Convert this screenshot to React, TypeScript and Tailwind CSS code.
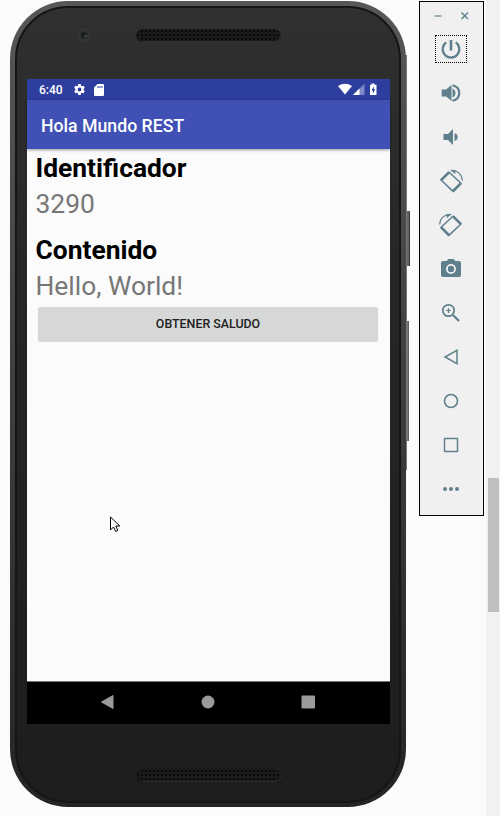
import type { ReactNode } from 'react';

function Grille({ id }: { id: string }) {
  return (
    <svg width="145" height="13" viewBox="0 0 145 13" className="block">
      <defs>
        <pattern id={id} width="4" height="4" patternUnits="userSpaceOnUse">
          <rect width="4" height="4" fill="#1b1b1b" />
          <rect x="1" y="1" width="2" height="2" fill="#0a0a0a" />
        </pattern>
      </defs>
      <rect x="0.5" y="0.5" width="144" height="12" rx="6" fill={`url(#${id})`} stroke="#191919" />
      <path d="M6 12.6H139a6 6 0 0 0 5.6-6" fill="none" stroke="#3a3a3a" strokeWidth="0.7" />
    </svg>
  );
}

function StatusBar() {
  return (
    <div className="flex h-[21px] items-center bg-[#2d3e9e] pl-3 pr-3 text-white">
      <span className="w-[34px] pt-[2px] text-[12px] font-medium leading-[21px]">6:40</span>
      <svg width="13" height="13" viewBox="0 0 24 24" fill="white">
        <path d="M19.4 13a7.6 7.6 0 0 0 0-2l2.1-1.6a.5.5 0 0 0 .1-.7l-2-3.4a.5.5 0 0 0-.6-.2l-2.5 1a7.300 7.300 0 0 0-1.700-1L14.400 2.400a.5.5 0 0 0-.5-.4h-4a.5.5 0 0 0-.5.4L9.100 5.100a7.700 7.700 0 0 0-1.700 1l-2.500-1a.5.5 0 0 0-.6.2l-2 3.400a.5.5 0 0 0 .1.700L4.500 11a7.600 7.600 0 0 0 0 2l-2.100 1.600a.5.5 0 0 0-.1.700l2 3.400c.1.200.4.300.6.200l2.500-1a7.300 7.300 0 0 0 1.700 1l.3 2.700c0 .2.200.4.500.4h4c.3 0 .5-.2.5-.4l.4-2.700a7.300 7.300 0 0 0 1.700-1l2.500 1c.2.100.5 0 .6-.2l2-3.400a.5.5 0 0 0-.1-.700ZM12 15.500a3.500 3.500 0 1 1 0-7 3.500 3.500 0 0 1 0 7Z" />
      </svg>
      <svg width="10" height="12" viewBox="0 0 10 12" className="ml-2" fill="white">
        <path fillRule="evenodd" d="M3.500 0H9q1 0 1 1v10q0 1-1 1H1q-1 0-1-1V3.500ZM3.500 2v2h1V2Zm2 0v2h1V2Zm2 0v2h1V2Z" />
      </svg>
      <svg width="40" height="13" viewBox="0 0 40 13" className="ml-auto">
        <path d="M0 3Q7 -1.600 14 3L7 11.500Z" fill="white" />
        <path d="M26.500 .8V12H15Z" fill="#7f89c6" />
        <path d="M21.500 5.600V12H15Z" fill="white" />
        <path d="M33.500 .5h3v1.300H38.500V12h-6.500V1.800h1.500Z" fill="white" />
        <path d="M35.700 3.300 33.500 7.400h1.400V10.700L37.200 6.300h-1.500Z" fill="#2d3e9e" />
      </svg>
    </div>
  );
}

function Screen() {
  return (
    <div className="flex h-[645px] w-[363px] flex-col bg-[#fbfbfb]">
      <StatusBar />
      <div className="z-10 flex h-[49px] items-center bg-[#4050b5] pl-[14px] pt-[3px] text-[17.700px] font-medium text-white shadow-[0_1px_3px_rgba(0,0,0,0.4)]">
        <span className="whitespace-nowrap">Hola Mundo REST</span>
      </div>
      <div className="flex-1 pl-[8.500px] pt-[2px] text-[26.400px] text-[#777]">
        <div className="h-[36px] font-bold leading-[34px] text-black">Identificador</div>
        <div className="h-[46px] leading-[34px]">3290</div>
        <div className="h-[36px] font-bold leading-[34px] text-black">Contenido</div>
        <div className="h-[37px] leading-[34px]">Hello, World!</div>
        <button className="ml-[2.500px] mt-px block h-[34px] w-[340px] rounded-[2px] bg-[#d6d8d7] text-center text-[12.400px] font-medium leading-[34px] text-[#212121] shadow-[0_1px_1px_rgba(0,0,0,0.15)]">
          OBTENER SALUDO
        </button>
      </div>
      <div className="flex h-[43px] items-center justify-center border-t border-[#777] bg-black pb-[2px]">
        <svg width="215" height="16" viewBox="0 0 215 16" className="block" fill="#999b9a">
          <path d="M12 1.500v13L.5 8Z" stroke="#999b9a" strokeLinejoin="round" />
          <circle cx="107" cy="8" r="6.500" />
          <rect x="200.500" y="1.500" width="13.500" height="13" rx="1" />
        </svg>
      </div>
    </div>
  );
}

function Cursor() {
  return (
    <svg width="12" height="19" viewBox="0 0 12 19" className="absolute left-[99px] top-[514px]">
      <path d="M1.500 2v13l3-3 2.300 4.500 2-1-2-4.500h4Z" fill="white" stroke="black" strokeWidth="1" />
    </svg>
  );
}

function Phone() {
  return (
    <div className="relative mt-px h-[806px] w-[396px] shrink-0">
      <div className="absolute right-[-4px] top-[210px] h-[55px] w-[5px] border-r border-[#383838] bg-[#666]" />
      <div className="absolute right-[-3px] top-[320px] h-[120px] w-[4px] border-r border-[#605f60] bg-[#777]" />
      <div className="absolute right-[-1px] top-[54px] h-[415px] w-[2px] bg-[#777]" />
      <div className="relative h-full rounded-[58px] bg-linear-to-b from-[#555856] via-[#414041] via-45% to-[#242424] p-[5px] pb-[4px]">
        <div className="flex h-full flex-col items-center rounded-[53px] border-2 border-[#151515] bg-linear-to-b from-[#303030] via-[#262626] via-35% to-[#1d1d1d]">
          <div className="relative flex h-[71px] w-full shrink-0 justify-center pt-[21px]">
            <svg width="16" height="16" viewBox="0 0 16 16" className="absolute left-[59px] top-[19px]">
              <circle cx="8" cy="8" r="7" fill="#343635" />
              <circle cx="8" cy="8" r="4.500" fill="#292c2c" />
              <circle cx="8" cy="8" r="2.500" fill="#171b1c" />
              <circle cx="9.500" cy="8.800" r="1.100" fill="#565958" />
            </svg>
            <div className="ml-px h-[13px]"><Grille id="earpiece" /></div>
          </div>
          <div className="ml-px"><Screen /></div>
          <div className="flex w-full justify-center pl-px pt-[45px]"><Grille id="speaker" /></div>
        </div>
      </div>
      <Cursor />
    </div>
  );
}

function Tool({ children }: { children: ReactNode }) {
  return (
    <div className="flex h-[44px] w-full items-center justify-center pr-px">
      <svg width="24" height="24" viewBox="0 0 24 24" fill="none" stroke="#5f7f8c">
        {children}
      </svg>
    </div>
  );
}

function RotateArt() {
  return (
    <>
      <path d="M9.800 3 22.200 14.500 14.300 22.600 1.800 10.700Z" strokeWidth="1.500" strokeLinejoin="round" />
      <path d="M9.800 3.600 2.400 10.900" strokeWidth="2.500" />
      <path d="M21.700 14.400 14.100 22" strokeWidth="2.500" />
      <path d="M12 1.500C18 1 23 5 23.300 11.500" strokeWidth="1.300" />
      <path d="M11.500 1 16.800 1.600 16 5Z" fill="#5f7f8c" stroke="none" />
    </>
  );
}

function Toolbar() {
  return (
    <div className="mt-px flex h-[515px] w-[65px] shrink-0 flex-col border border-black bg-[#f0f0f0]">
      <div className="h-[25px]">
        <svg width="63" height="25" viewBox="0 0 63 25" fill="none" stroke="#5f7f8c" strokeWidth="1.400">
          <path d="M14.500 14h7" stroke="#91a7b0" strokeWidth="1.800" />
          <path d="m41.500 10.500 6.500 6.500m0-6.500-6.500 6.500" />
        </svg>
      </div>
      <div className="flex h-[44px] items-center justify-center pr-px">
        <div className="flex h-[28px] w-[32px] items-center justify-center border border-dotted border-black">
          <svg width="24" height="24" viewBox="0 0 24 24" fill="none" stroke="#5f7f8c" strokeWidth="2.200">
            <path d="M12 3V13.500" strokeWidth="2.600" />
            <path d="M7.300 5.400A8.300 8.300 0 1 0 16.700 5.400" />
          </svg>
        </div>
      </div>
      <Tool>
        <path d="M2.700 8.500h4.500L12.500 4v16l-5.300-4.500H2.700Z" fill="#5f7f8c" stroke="none" />
        <path d="M13.500 7.500Q16.500 9 16.500 12t-3 4.500Z" fill="#5f7f8c" stroke="none" />
        <path d="M13.500 4.200c9 2 9 13.600 0 15.600" strokeWidth="2.200" />
      </Tool>
      <Tool>
        <path d="M4.500 9H9l5-5v16l-5-5H4.500Z" fill="#5f7f8c" stroke="none" />
        <path d="M15.500 8Q18.700 9 18.700 12t-3.200 4Z" fill="#5f7f8c" stroke="none" />
      </Tool>
      <Tool><RotateArt /></Tool>
      <Tool><g transform="translate(24 0) scale(-1 1)"><RotateArt /></g></Tool>
      <Tool>
        <path transform="translate(0 -1)" fillRule="evenodd" d="M4 5h3.500l2-2h5l2 2H20q2 0 2 2v12q0 2-2 2H4q-2 0-2-2V7q0-2 2-2Zm8 3a5 5 0 1 0 0 10 5 5 0 0 0 0-10Zm0 1.800a3.200 3.200 0 1 1 0 6.400 3.200 3.200 0 0 1 0-6.400Z" fill="#5f7f8c" stroke="none" />
      </Tool>
      <Tool>
        <circle cx="9.500" cy="9.500" r="5.700" strokeWidth="1.700" />
        <path d="M9.500 7v5M7 9.500h5" strokeWidth="1.200" />
        <path d="m14 14 6 6" strokeWidth="2.200" />
      </Tool>
      <Tool><path d="M18 5.300v13.400L6 12Z" strokeWidth="1.500" /></Tool>
      <Tool><circle cx="12" cy="12" r="6.500" strokeWidth="1.600" /></Tool>
      <Tool><rect x="5.500" y="5.500" width="13" height="13" rx=".5" strokeWidth="1.500" /></Tool>
      <Tool>
        <g fill="#5f7f8c" stroke="none"><circle cx="6" cy="12" r="2" /><circle cx="12" cy="12" r="2" /><circle cx="18" cy="12" r="2" /></g>
      </Tool>
    </div>
  );
}

export default function App() {
  return (
    <div className="flex h-[816px] w-[500px] overflow-hidden bg-[#fbfbfb] pl-[10px] font-[Roboto,sans-serif]">
      <Phone />
      <div className="ml-[13px]"><Toolbar /></div>
      <div className="ml-[2px] h-full w-[14px] bg-[#f1f1f1] pl-[2px] pt-[478px]">
        <div className="h-[134px] w-[11px] bg-[#bebfbf]" />
      </div>
    </div>
  );
}
